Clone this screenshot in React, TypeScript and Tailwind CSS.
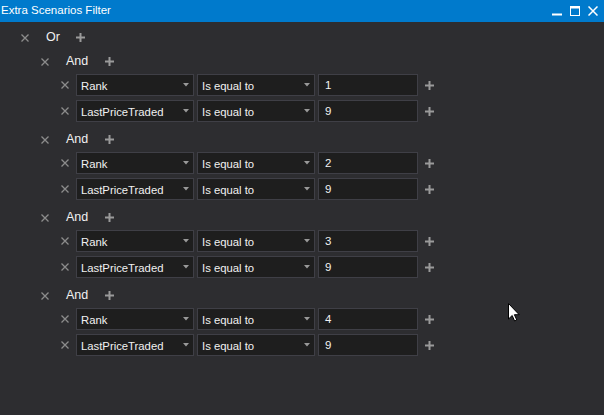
import React from 'react'

const font = { fontFamily: '"Liberation Sans", Arial, sans-serif' }

const groups = [
  { rank: '1', price: '9' },
  { rank: '2', price: '9' },
  { rank: '3', price: '9' },
  { rank: '4', price: '9' },
]

const CloseIcon = () => (
  <svg width="8" height="8" viewBox="0 0 8 8" className="text-[#8c8c8c]">
    <path d="M0.5 0.5 L7.5 7.5 M7.5 0.5 L0.5 7.5" stroke="currentColor" strokeWidth="1.3" />
  </svg>
)

const PlusIcon = () => (
  <svg width="9" height="9" viewBox="0 0 9 9" className="text-[#9a9a9a]">
    <path d="M4.5 0 V9 M0 4.5 H9" stroke="currentColor" strokeWidth="2" />
  </svg>
)

const Header = ({ label }: { label: string }) => (
  <div className="flex h-[24px] items-center pt-[1px]">
    <div className="flex w-[20px] justify-center">
      <CloseIcon />
    </div>
    <span className="ml-[11px] text-[12.5px] text-[#f1f1f1]">{label}</span>
    <div className="ml-[11px] flex w-[20px] justify-center">
      <PlusIcon />
    </div>
  </div>
)

const Select = ({ value, width }: { value: string; width: string }) => (
  <div
    className={`flex h-[22px] ${width} items-center justify-between border border-[#3f3f46] bg-[#1e1e1e] pl-[4px] pr-[4px] text-[11.3px] text-[#f1f1f1]`}
  >
    <span className="pt-[2px]">{value}</span>
    <svg width="6" height="4" viewBox="0 0 6 4">
      <path d="M0 0 H6 L3 3.5 Z" fill="#999999" />
    </svg>
  </div>
)

const Condition = ({ field, value }: { field: string; value: string }) => (
  <div className="flex h-[22px] items-center">
    <div className="flex w-[20px] justify-center">
      <CloseIcon />
    </div>
    <div className="ml-[1px] flex gap-[3px]">
      <Select value={field} width="w-[118px]" />
      <Select value="Is equal to" width="w-[118px]" />
      <div className="flex h-[22px] w-[100px] items-center border border-[#3f3f46] bg-[#1e1e1e] pl-[6px] pt-[2px] text-[11.5px] text-[#f1f1f1]">
        {value}
      </div>
    </div>
    <div className="flex w-[22px] justify-center">
      <PlusIcon />
    </div>
  </div>
)

export default function App() {
  return (
    <div className="relative h-[415px] w-[604px] overflow-hidden bg-[#2d2d30]" style={font}>
      <div className="flex h-[22px] items-center justify-between bg-[#007acc] pl-[1px] pr-[6px]">
        <span className="text-[11.5px] text-white">Extra Scenarios Filter</span>
        <div className="flex items-center gap-[8px]">
          <svg width="10" height="10" viewBox="0 0 10 10">
            <rect x="0" y="7.5" width="10" height="2" fill="white" />
          </svg>
          <svg width="10" height="10" viewBox="0 0 10 10">
            <rect x="0.5" y="0.5" width="9" height="9" fill="none" stroke="white" strokeWidth="1" />
            <rect x="0" y="0" width="10" height="2.5" fill="white" />
          </svg>
          <svg width="10" height="10" viewBox="0 0 10 10">
            <path d="M0.5 0.5 L9.5 9.5 M9.5 0.5 L0.5 9.5" stroke="white" strokeWidth="1.5" />
          </svg>
        </div>
      </div>

      <div className="pl-[15px] pt-[3px]">
        <Header label="Or" />
        <div className="pl-[20px]">
          {groups.map((g, i) => (
            <div key={i} className="pb-[5px]">
              <Header label="And" />
              <div className="mt-[1px] flex flex-col gap-[4px] pl-[20px]">
                <Condition field="Rank" value={g.rank} />
                <Condition field="LastPriceTraded" value={g.price} />
              </div>
            </div>
          ))}
        </div>
      </div>

      <svg
        className="absolute left-[508px] top-[303px]"
        width="12"
        height="19"
        viewBox="0 0 12 19"
      >
        <path
          d="M0.5 0.5 L0.5 16 L4.2 12.5 L6.6 18 L8.8 17 L6.4 11.7 L11.2 11.7 Z"
          fill="white"
          stroke="black"
          strokeWidth="1"
          strokeLinejoin="miter"
        />
      </svg>
    </div>
  )
}
